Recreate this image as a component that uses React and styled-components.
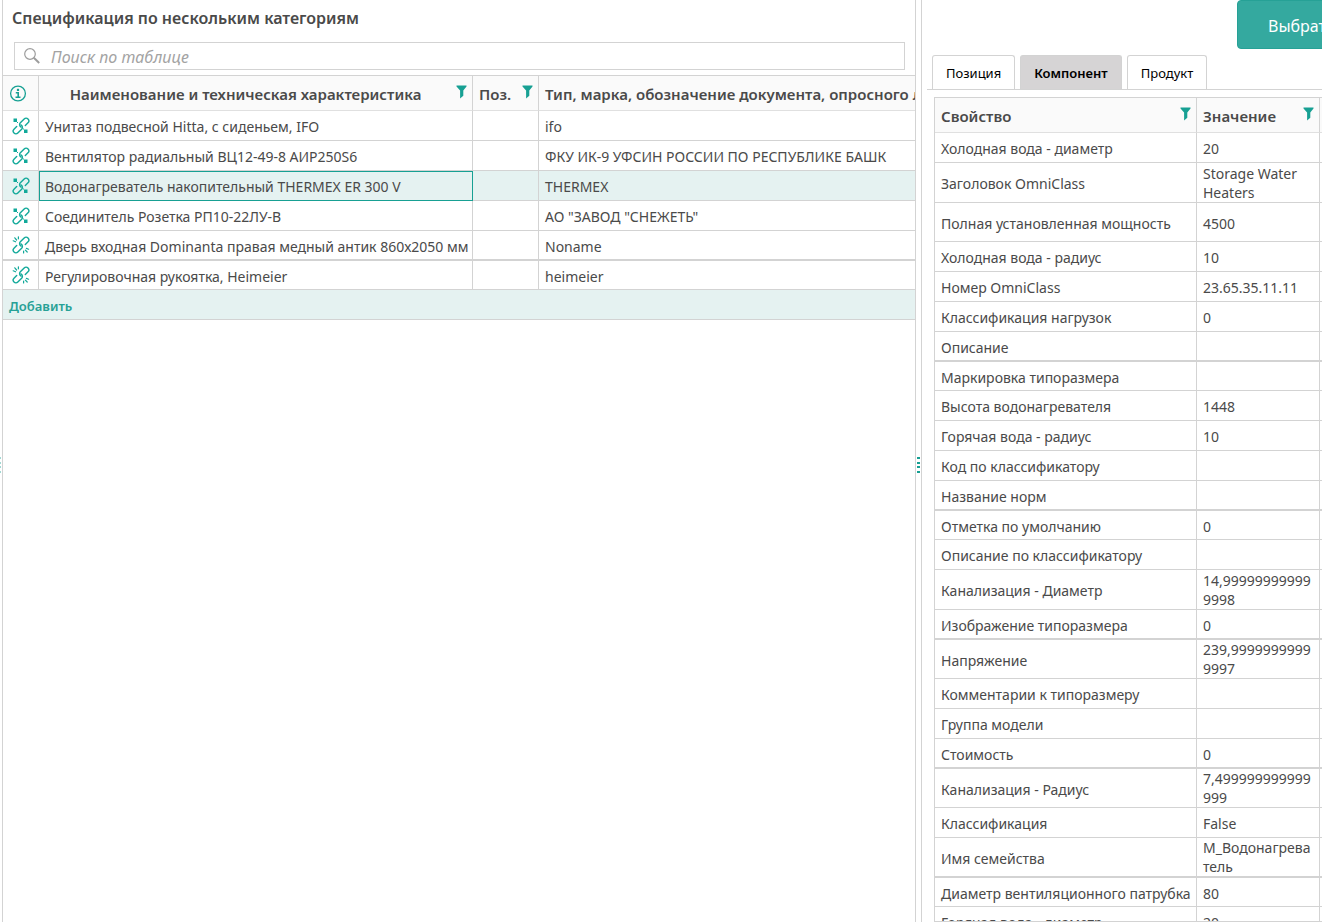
import { useState } from 'react'
import styled, { createGlobalStyle, css } from 'styled-components'

const teal = '#17a093'
const line = '#d3d3d3'

const GlobalStyle = createGlobalStyle`
	* {
		box-sizing: border-box;
	}

	body {
		margin: 0;
		background: #fff;
		color: #4a4a4a;
		font-family: 'Noto Sans', sans-serif;
		font-size: 14px;
		overflow: hidden;
	}

	button,
	input {
		font-family: inherit;
		font-size: inherit;
	}

	svg {
		display: block;
		flex: none;
	}
`

// heavy rows carry a double line, the row after them is one pixel shorter
const itemsData = [
	{ id: 1, name: 'Унитаз подвесной Hitta, с сиденьем, IFO', type: 'ifo', linked: true },
	{ id: 2, name: 'Вентилятор радиальный ВЦ12-49-8 АИР250S6', type: 'ФКУ ИК-9 УФСИН РОССИИ ПО РЕСПУБЛИКЕ БАШК', linked: true },
	{ id: 3, name: 'Водонагреватель накопительный THERMEX ER 300 V', type: 'THERMEX', linked: true },
	{ id: 4, name: 'Соединитель Розетка РП10-22ЛУ-В', type: 'АО "ЗАВОД "СНЕЖЕТЬ"', linked: true },
	{ id: 5, name: 'Дверь входная Dominanta правая медный антик 860х2050 мм', type: 'Noname', linked: false, heavy: true },
	{ id: 6, name: 'Регулировочная рукоятка, Heimeier', type: 'heimeier', linked: false, height: 29 },
]

const propertiesData = [
	{ name: 'Холодная вода - диаметр', value: '20' },
	{ name: 'Заголовок OmniClass', value: 'Storage Water Heaters', height: 40 },
	{ name: 'Полная установленная мощность', value: '4500', height: 39 },
	{ name: 'Холодная вода - радиус', value: '10' },
	{ name: 'Номер OmniClass', value: '23.65.35.11.11' },
	{ name: 'Классификация нагрузок', value: '0' },
	{ name: 'Описание', value: '', heavy: true },
	{ name: 'Маркировка типоразмера', value: '', height: 29 },
	{ name: 'Высота водонагревателя', value: '1448' },
	{ name: 'Горячая вода - радиус', value: '10' },
	{ name: 'Код по классификатору', value: '' },
	{ name: 'Название норм', value: '', heavy: true },
	{ name: 'Отметка по умолчанию', value: '0', height: 29 },
	{ name: 'Описание по классификатору', value: '' },
	{ name: 'Канализация - Диаметр', value: '14,999999999999998', height: 40 },
	{ name: 'Изображение типоразмера', value: '0', heavy: true },
	{ name: 'Напряжение', value: '239,99999999999997', height: 39 },
	{ name: 'Комментарии к типоразмеру', value: '' },
	{ name: 'Группа модели', value: '' },
	{ name: 'Стоимость', value: '0', heavy: true },
	{ name: 'Канализация - Радиус', value: '7,499999999999999', height: 39 },
	{ name: 'Классификация', value: 'False' },
	{ name: 'Имя семейства', value: 'М_Водонагреватель', height: 40, heavy: true },
	{ name: 'Диаметр вентиляционного патрубка', value: '80', height: 29 },
	{ name: 'Горячая вода - диаметр', value: '20' },
]

const tabs = ['Позиция', 'Компонент', 'Продукт']

const Page = styled.div`
	display: flex;
	height: 100vh;
	overflow: hidden;
`

const Splitter = styled.div`
	display: flex;
	flex: none;
	align-items: center;
	padding-top: 8px;
	padding-left: ${(props) => (props.$edge ? 0 : 1)}px;
	width: ${(props) => (props.$edge ? 2 : 5)}px;
	opacity: ${(props) => (props.$edge ? 0.4 : 1)};
`

const SpecPanel = styled.main`
	display: flex;
	flex-direction: column;
	flex: 1;
	min-width: 0;
	border: solid ${line};
	border-width: 0 1px;
`

const Title = styled.h1`
	margin: 0;
	padding: 6px 9px 0;
	font-size: 16px;
	line-height: 24px;
	font-weight: 600;
`

const SearchBox = styled.label`
	display: flex;
	align-items: center;
	height: 28px;
	margin: 12px 10px 5px 11px;
	padding-left: 8px;
	border: 1px solid ${line};
`

const SearchInput = styled.input`
	flex: 1;
	min-width: 0;
	margin-left: 10px;
	padding: 2px 0 0;
	border: none;
	outline: none;
	background: none;
	font-size: 16px;

	&::placeholder {
		color: #a3a3a3;
		font-style: italic;
		opacity: 1;
	}
`

const Table = styled.table`
	width: 100%;
	table-layout: fixed;
	border-collapse: separate;
	border-spacing: 0;
	border-top: 1px solid ${line};
`

const Col = styled.col`
	width: ${(props) => props.$width || 'auto'};
`

const HeadCell = styled.th`
	height: 35px;
	padding: 2px 0 0 6px;
	background: #fafafa;
	border-right: 1px solid ${line};
	border-bottom: 1px solid #e0e0e0;
	font-size: 15px;
	line-height: 20px;
	font-weight: 600;
	text-align: left;
	white-space: nowrap;
	overflow: hidden;

	&:last-child {
		border-right: none;
	}
`

const HeadContent = styled.div`
	display: flex;
	align-items: center;
`

const HeadLabel = styled.span`
	flex: 1;
	padding-right: ${(props) => (props.$center ? 10 : 0)}px;
	text-align: ${(props) => (props.$center ? 'center' : 'left')};
`

const FilterButton = styled.button`
	display: flex;
	flex: none;
	margin: 0 5px 4px 0;
	padding: 0;
	border: none;
	background: none;
	cursor: pointer;
`

const Cell = styled.td`
	height: ${(props) => props.$height || 30}px;
	padding: ${(props) => (props.$wrap ? '0 6px' : '2px 0 0 6px')};
	border-right: 1px solid ${line};
	border-bottom: ${(props) => (props.$heavy ? 2 : 1)}px solid ${line};
	line-height: 19px;
	white-space: ${(props) => (props.$wrap ? 'normal' : 'nowrap')};
	overflow: hidden;
	overflow-wrap: anywhere;

	&:last-child {
		border-right: none;
	}
`

const IconCell = styled(Cell)`
	padding: 0 0 0 9px;
`

const Row = styled.tr`
	cursor: default;

	${(props) =>
		props.$selected &&
		css`
			background: #e5f2f1;

			td:nth-child(2) {
				outline: 1px solid ${teal};
				outline-offset: -1px;
			}
		`}
`

const AddButton = styled.button`
	flex: none;
	height: 30px;
	padding: 2px 0 0 6px;
	border: none;
	border-bottom: 1px solid ${line};
	background: #e5f2f1;
	color: #27a196;
	font-size: 13px;
	font-weight: 600;
	text-align: left;
	cursor: pointer;
`

const SidePanel = styled.aside`
	display: flex;
	flex-direction: column;
	flex: none;
	width: 401px;
	border-left: 1px solid ${line};
	overflow: hidden;
`

const Toolbar = styled.div`
	display: flex;
	flex: none;
	padding-left: 315px;
`

const SelectButton = styled.button`
	flex: none;
	height: 49px;
	padding: 2px 30px 0;
	border: 1px solid #26a196;
	border-radius: 4px;
	background: #34a99f;
	color: #fff;
	font-size: 16px;
	cursor: pointer;
`

const TabList = styled.div`
	display: flex;
	flex: none;
	gap: 5px;
	margin: 6px 0 7px 5px;
	padding-left: 5px;
	border-bottom: 1px solid ${line};
`

const Tab = styled.button`
	height: 34px;
	padding: 1px 13px 0;
	border: 1px solid ${line};
	border-bottom: none;
	border-radius: 3px 3px 0 0;
	background: ${(props) => (props.$active ? '#d6d4d5' : '#fff')};
	color: #000;
	font-size: 13px;
	font-weight: ${(props) => (props.$active ? 600 : 400)};
	cursor: pointer;
`

const PropertyArea = styled.div`
	flex: 1;
	min-height: 0;
	margin-left: 12px;
	border-left: 1px solid ${line};
	border-bottom: 1px solid ${line};
	overflow: hidden;
`

const FilterIcon = () => (
	<svg width='11' height='14' viewBox='0 0 11 14' fill={teal}>
		<path d='M0.5 0.5h10v1L7.3 5.5v5.3l-3.2 2.7V5.5L0.5 1.5z' />
	</svg>
)

const SearchIcon = () => (
	<svg width='18' height='18' viewBox='0 0 18 18' fill='none' stroke='#9d9d9d'>
		<circle cx='7' cy='7' r='5.3' strokeWidth='1.2' />
		<path d='M10.8 10.8l5.4 5.2' strokeWidth='2' />
	</svg>
)

const InfoIcon = () => (
	<svg width='18' height='18' viewBox='0 0 18 18' fill='none' stroke={teal}>
		<circle cx='9' cy='8.5' r='7.4' strokeWidth='1.3' />
		<path d='M9 3.8v2.2' strokeWidth='2.2' />
		<path d='M6.8 7.7h2.4v4.4M6.5 12.3h5' strokeWidth='1.6' />
	</svg>
)

const LinkIcon = ({ linked }) => (
	<svg width='18' height='18' viewBox='0 0 18 18' fill='none' stroke='#12a99a' strokeWidth='1.4' strokeLinecap='round'>
		<g transform='translate(9 9) rotate(-45)'>
			<path d='M3.4 2.7H7.2a2.7 2.7 0 0 0 0-5.4H1.8a2.7 2.7 0 0 0-2.5 3.5' />
			<path d='M-3.4-2.7H-7.2a2.7 2.7 0 0 0 0 5.4H-1.8a2.7 2.7 0 0 0 2.5-3.5' />
		</g>
		{linked ? (
			<g fill='#12a99a' stroke='none'>
				<path d='M1.5 1.5h3.5v3.5H1.5zM12 12.5h3.5V16h-3.5z' />
				<path d='M5 5h1v1H5zM11 11.5h1v1h-1z' />
			</g>
		) : (
			<path d='M1.2 4.8l2.4 1M2.8 1.8l1.8 2.2M6.4 0.8v2M16.6 13.2l-2.2-0.8M15.2 16l-1.8-1.8M11.6 15v2' strokeWidth='1.2' />
		)}
	</svg>
)

const Dots = ({ width }) => (
	<svg width={width} height='16' viewBox={`0 0 ${width} 16`} fill={teal}>
		<path d='M0 0h3v2H0zM0 5h3v2H0zM0 9h3v2H0zM0 14h3v2H0z' />
	</svg>
)

const Filter = ({ label }) => (
	<FilterButton type='button' aria-label={label}>
		<FilterIcon />
	</FilterButton>
)

const App = () => {
	const [selectedId, setSelectedId] = useState(3)
	const [activeTab, setActiveTab] = useState('Компонент')
	const [search, setSearch] = useState('')

	const items = itemsData.filter((item) => item.name.toLowerCase().includes(search.toLowerCase()))

	return (
		<Page>
			<GlobalStyle />
			<Splitter $edge>
				<Dots width={1} />
			</Splitter>
			<SpecPanel>
				<Title>Спецификация по нескольким категориям</Title>
				<SearchBox>
					<SearchIcon />
					<SearchInput
						type='text'
						aria-label='Поиск по таблице'
						placeholder='Поиск по таблице'
						value={search}
						onChange={(e) => setSearch(e.target.value)}
					/>
				</SearchBox>
				<Table>
					<colgroup>
						<Col $width='36px' />
						<Col $width='434px' />
						<Col $width='66px' />
						<Col />
					</colgroup>
					<thead>
						<tr>
							<HeadCell>
								<InfoIcon />
							</HeadCell>
							<HeadCell>
								<HeadContent>
									<HeadLabel $center>Наименование и техническая характеристика</HeadLabel>
									<Filter label='Фильтр: наименование' />
								</HeadContent>
							</HeadCell>
							<HeadCell>
								<HeadContent>
									<HeadLabel>Поз.</HeadLabel>
									<Filter label='Фильтр: позиция' />
								</HeadContent>
							</HeadCell>
							<HeadCell>Тип, марка, обозначение документа, опросного листа</HeadCell>
						</tr>
					</thead>
					<tbody>
						{items.map((item) => (
							<Row key={item.id} $selected={item.id === selectedId} onClick={() => setSelectedId(item.id)}>
								<IconCell $height={item.height} $heavy={item.heavy}>
									<LinkIcon linked={item.linked} />
								</IconCell>
								<Cell $height={item.height} $heavy={item.heavy}>
									{item.name}
								</Cell>
								<Cell $height={item.height} $heavy={item.heavy} />
								<Cell $height={item.height} $heavy={item.heavy}>
									{item.type}
								</Cell>
							</Row>
						))}
					</tbody>
				</Table>
				<AddButton type='button'>Добавить</AddButton>
			</SpecPanel>
			<Splitter>
				<Dots width={3} />
			</Splitter>
			<SidePanel>
				<Toolbar>
					<SelectButton type='button'>Выбрать</SelectButton>
				</Toolbar>
				<TabList role='tablist'>
					{tabs.map((tab) => (
						<Tab
							key={tab}
							type='button'
							role='tab'
							aria-selected={tab === activeTab}
							$active={tab === activeTab}
							onClick={() => setActiveTab(tab)}>
							{tab}
						</Tab>
					))}
				</TabList>
				<PropertyArea>
					<Table>
						<colgroup>
							<Col $width='262px' />
							<Col $width='123px' />
							<Col />
						</colgroup>
						<thead>
							<tr>
								<HeadCell>
									<HeadContent>
										<HeadLabel>Свойство</HeadLabel>
										<Filter label='Фильтр: свойство' />
									</HeadContent>
								</HeadCell>
								<HeadCell>
									<HeadContent>
										<HeadLabel>Значение</HeadLabel>
										<Filter label='Фильтр: значение' />
									</HeadContent>
								</HeadCell>
								<HeadCell />
							</tr>
						</thead>
						<tbody>
							{propertiesData.map((property) => (
								<Row key={property.name}>
									<Cell $height={property.height} $heavy={property.heavy}>
										{property.name}
									</Cell>
									<Cell $height={property.height} $heavy={property.heavy} $wrap={property.value.length > 14}>
										{property.value}
									</Cell>
									<Cell $height={property.height} $heavy={property.heavy} />
								</Row>
							))}
						</tbody>
					</Table>
				</PropertyArea>
			</SidePanel>
		</Page>
	)
}

export default App
